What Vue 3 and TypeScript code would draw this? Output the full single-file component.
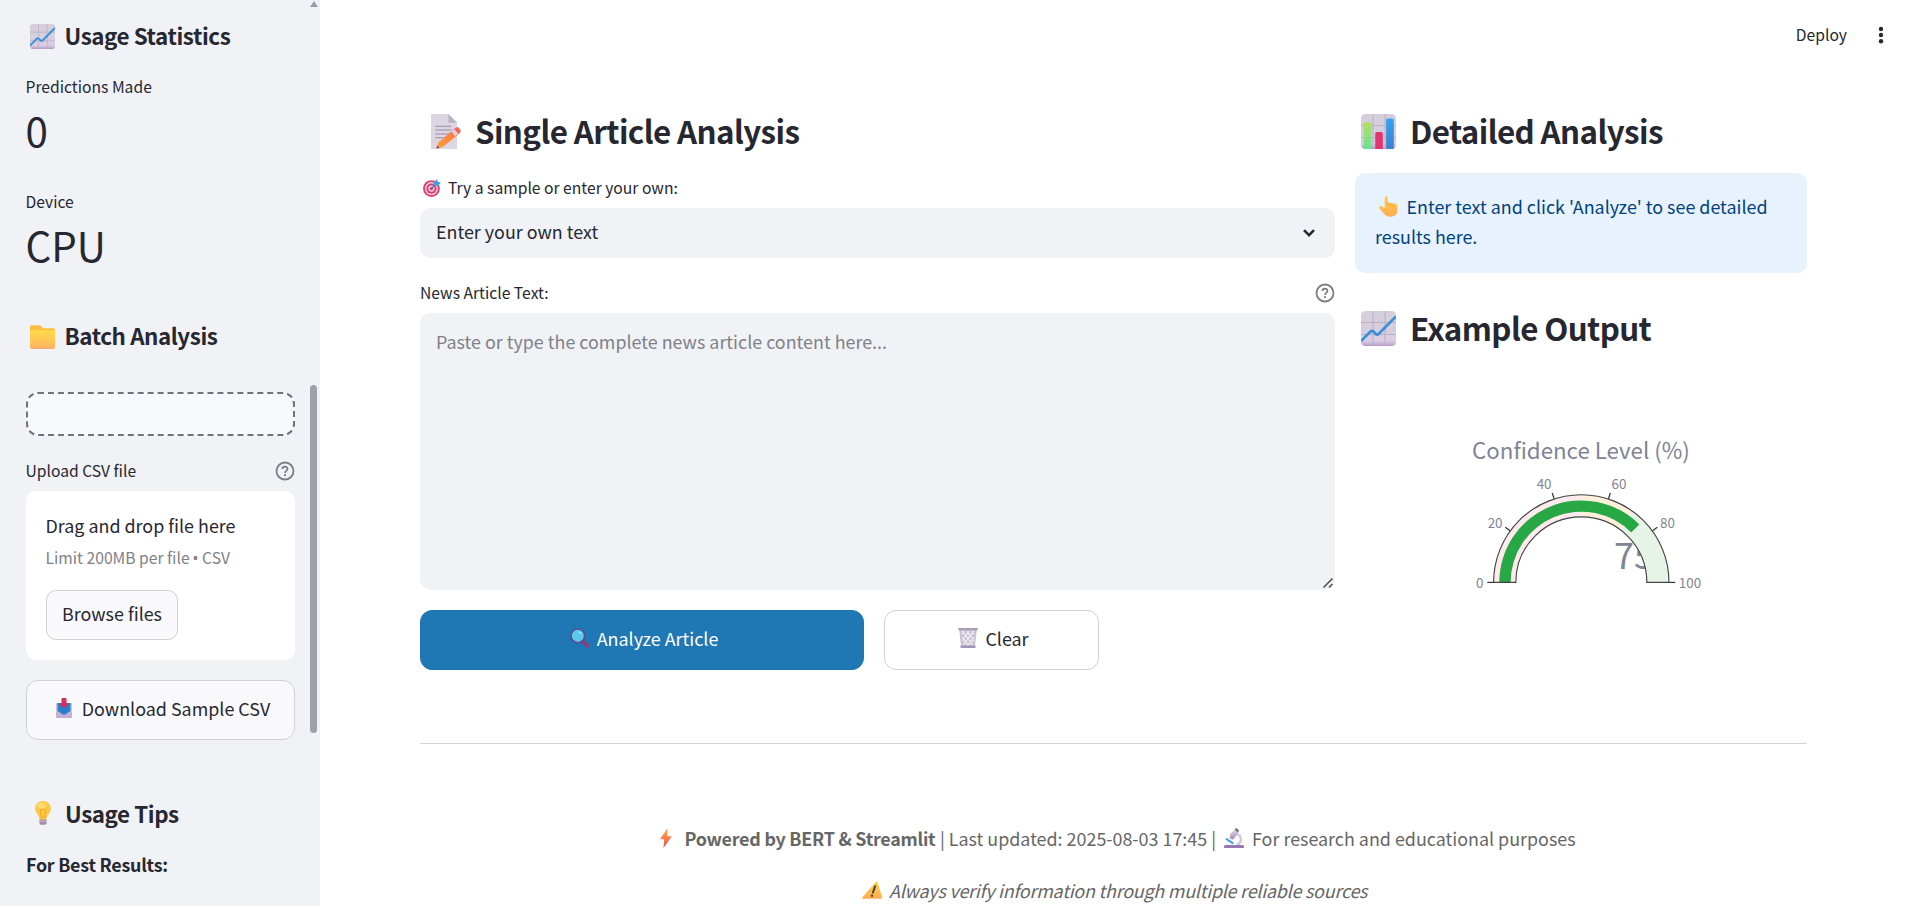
<script setup lang="ts">
import { computed } from 'vue'

const value = 75
const cx = 106.3
const cy = 152.4

function point(pct: number, r: number): string {
  const a = Math.PI * (1 - pct / 100)
  return `${(cx + r * Math.cos(a)).toFixed(2)} ${(cy - r * Math.sin(a)).toFixed(2)}`
}
function band(from: number, to: number, inner: number, outer: number): string {
  return `M${point(from, outer)}A${outer} ${outer} 0 0 1 ${point(to, outer)}L${point(to, inner)}A${inner} ${inner} 0 0 0 ${point(from, inner)}Z`
}
const steps = [
  { from: 0, to: 50, fill: '#ffebee' },
  { from: 50, to: 70, fill: '#fff0dc' },
  { from: 70, to: 100, fill: '#e8f3e8' },
]
const ticks = [
  { v: 0, x: 1, y: 158, anchor: 'start' },
  { v: 20, x: 27.5, y: 98, anchor: 'end' },
  { v: 40, x: 76.5, y: 59, anchor: 'end' },
  { v: 60, x: 136.5, y: 59, anchor: 'start' },
  { v: 80, x: 185, y: 98, anchor: 'start' },
  { v: 100, x: 203.8, y: 158, anchor: 'start' },
]
const bar = computed(() => band(0, value, 70.7, 82))
</script>

<template>
  <svg class="defs" width="0" height="0" aria-hidden="true">
    <defs>
      <linearGradient id="gPaper" x1="0" y1="0" x2="0" y2="1"><stop offset="0" stop-color="#d5cfda" /><stop offset=".85" stop-color="#d9cde4" /><stop offset="1" stop-color="#b59bc9" /></linearGradient>
      <linearGradient id="gBlue" x1="0" y1="0" x2="0" y2="1"><stop offset="0" stop-color="#35a4f2" /><stop offset="1" stop-color="#3c7fd0" /></linearGradient>
      <linearGradient id="gGreen" x1="0" y1="0" x2="0" y2="1"><stop offset="0" stop-color="#b2e05a" /><stop offset="1" stop-color="#67e294" /></linearGradient>
      <linearGradient id="gFolder" x1="0" y1="0" x2="0" y2="1"><stop offset="0" stop-color="#ffdb4d" /><stop offset=".9" stop-color="#ffb75c" /><stop offset="1" stop-color="#f5a387" /></linearGradient>
      <linearGradient id="gPencil" x1="1" y1="0" x2="0" y2="1"><stop offset="0" stop-color="#ff7040" /><stop offset="1" stop-color="#f8a040" /></linearGradient>
      <linearGradient id="gYellow" x1="0" y1="0" x2="0" y2="1"><stop offset="0" stop-color="#ffcf3f" /><stop offset="1" stop-color="#ffab55" /></linearGradient>
      <linearGradient id="gBolt" x1="0" y1="0" x2="0" y2="1"><stop offset="0" stop-color="#ffb044" /><stop offset="1" stop-color="#f3504f" /></linearGradient>
      <linearGradient id="gPurple" x1="0" y1="0" x2="0" y2="1"><stop offset="0" stop-color="#dedbe2" /><stop offset="1" stop-color="#a78dbd" /></linearGradient>
      <radialGradient id="gBulb"><stop offset="0" stop-color="#ffc93c" /><stop offset="1" stop-color="#ffc84a" /></radialGradient>
      <symbol id="chart" viewBox="0 0 32 32" preserveAspectRatio="none">
        <rect width="32" height="32" rx="4" fill="url(#gPaper)" />
        <path d="M11 0V32M22 0V32M0 10.5H32M0 21.5H32" stroke="#bbb2c5" stroke-width="1" />
        <path d="M0 27.5L8.5 19C9.5 18 10.5 18 11.5 19L13.3 20.8C14.3 21.8 15.3 21.8 16.3 20.8L32 5" fill="none" stroke="#378fd6" stroke-width="2.4" />
      </symbol>
      <symbol id="bars" viewBox="0 0 32 32">
        <rect width="32" height="32" rx="4" fill="url(#gPaper)" />
        <path d="M11 0V32M22 0V32M0 10.5H32M0 21.5H32" stroke="#bbb2c5" stroke-width="1" />
        <path d="M2.5 32V9Q2.5 7.5 4 7.5H8Q9.5 7.5 9.5 9V32Z" fill="url(#gGreen)" />
        <path d="M13 32V18Q13 16.5 14.5 16.5H18.5Q20 16.5 20 18V32Z" fill="#e2366c" />
        <path d="M23 32V5.500Q23 4 24.500 4H28.500Q30 4 30 5.500V32Z" fill="url(#gBlue)" />
      </symbol>
      <symbol id="folder" viewBox="0 0 32 32">
        <path d="M0 4Q0 1.500 2.500 1.500H11Q13 1.500 14.500 3L17 5.500H29.500Q32 5.500 32 8V12H0Z" fill="#f9bd42" />
        <path d="M0 9Q0 8 1 8H29Q32 7.500 32 10V29.500Q32 32 29.500 32H2.500Q0 32 0 29.500Z" fill="url(#gFolder)" />
      </symbol>
      <symbol id="memo" viewBox="0 0 32 36">
        <path d="M1 0H19L28 9V36H1Z" fill="#dcd5e3" />
        <path d="M19 0V9H28Z" fill="#b9b0c1" />
        <path d="M5.500 12.500H22M5.500 16.500H22M5.500 20.500H20M5.500 24.500H14" stroke="#948f9a" stroke-width="1.1" />
        <path d="M6.500 35.500L9 29L26 14.500L30.500 20L13 34Z" fill="url(#gPencil)" />
        <path d="M6.500 35.500L7.700 32.500L9.500 34.700Z" fill="#6b3b58" />
        <path d="M22 18L26 14.700L30 20L26 23Z" fill="#dccfe2" />
        <path d="M25 15.500L27.500 13.500Q28.500 13 29.500 14L31.600 17Q32 18 31 19L29.500 20.500Z" fill="#ff6250" />
      </symbol>
      <symbol id="target" viewBox="0 0 32 32">
        <circle cx="15" cy="17" r="15" fill="#e2406f" /><circle cx="15" cy="17" r="11.500" fill="#e8d5e6" /><circle cx="15" cy="17" r="9" fill="#de3d6f" /><circle cx="15" cy="17" r="5.500" fill="#ead9ea" /><circle cx="15" cy="17" r="3" fill="#d33566" />
        <path d="M15 17L24 8" stroke="#2775b8" stroke-width="2" /><path d="M19 12V6L25 0L26 5L32 6L26 12Z" fill="#3ca1e8" />
      </symbol>
      <symbol id="search" viewBox="0 0 32 32">
        <path d="M20.500 21.500L28 28.500" stroke="#85417d" stroke-width="6" stroke-linecap="round" />
        <circle cx="12.500" cy="12.500" r="11" fill="#5bc8ec" stroke="#594e91" stroke-width="2.600" />
        <ellipse cx="16.500" cy="7.500" rx="2.500" ry="1.500" fill="#a4e5fb" transform="rotate(35 16.500 7.500)" />
      </symbol>
      <symbol id="trash" viewBox="0 0 32 32">
        <path d="M2 3H30L27 31H5Z" fill="#c9c1d4" />
        <path d="M7 5L24 28M14 5L26 21M22 5L26 10M7 15L17 29M25 5L8 28M18 5L7 20M10 5L6 10M26 15L15 29" stroke="#f4f0f7" stroke-width="1.700" />
        <rect x="0" y="0" width="32" height="3.500" rx="1.500" fill="#a79eb2" /><rect x="4" y="28" width="24" height="4" rx="1" fill="#a394b8" />
      </symbol>
      <symbol id="inbox" viewBox="0 0 32 40">
        <rect y="10" width="32" height="30" rx="2" fill="#c9c3d3" />
        <path d="M3 10H29V26L20 33H12L3 26Z" fill="#287fce" />
        <path d="M0 29H9C11 29 10 34 13 34H19C22 34 21 29 23 29H32V38Q32 40 30 40H2Q0 40 0 38Z" fill="#c4b0d6" />
        <path d="M11 0H21V11H26L16 21L6 11H11Z" fill="#d62e5d" />
      </symbol>
      <symbol id="bulb" viewBox="0 0 20 32">
        <rect x="5.500" y="22" width="9" height="8.500" rx="2" fill="#a88cac" /><path d="M6 26H14" stroke="#d2c2d6" />
        <path d="M10 0C4 0 0 4.500 0 9.500C0 14.500 4 17 5.500 22Q6 24 8 24H12Q14 24 14.500 22C16 17 20 14.500 20 9.500C20 4.500 16 0 10 0Z" fill="url(#gBulb)" />
        <ellipse cx="8" cy="6" rx="5" ry="4" fill="#ffe184" opacity=".7" /><path d="M8.500 23L6.500 14Q6 10.500 10 10.500T13.500 14L11.500 23" fill="none" stroke="#f3a22e" stroke-width="1.300" />
      </symbol>
      <symbol id="hand" viewBox="0 0 30 32">
        <path d="M9 2.500Q9 0 11.500 0T14 2.500V10Q17 8.500 18.500 11Q21 9.500 23 12Q26 10.500 27 12Q29 13 29 16V22Q29 32 18 32Q11 32 8 28L1.500 20Q-.5 17 2 15.500Q4 14.500 6.500 17L9 19Z" fill="url(#gYellow)" />
        <path d="M14 10V15M18.500 11V15M23 12V15.500" stroke="#ee9c3f" stroke-width="1" />
      </symbol>
      <symbol id="bolt" viewBox="0 0 18 32"><path d="M11.500 0L0 17Q-.3 18 1 18H6L5 32L18 14Q18.300 13 17 13H11Z" fill="url(#gBolt)" /></symbol>
      <symbol id="scope" viewBox="0 0 32 32">
        <path d="M17 9Q28 10 27 20Q26 25 20 27" fill="none" stroke="#cfc9d8" stroke-width="3.800" />
        <path d="M10 9L18 2L23 8L15 18Q11 19 9 15Z" fill="url(#gPurple)" /><path d="M17 2L20 0L24 4L22 7Z" fill="#6e6777" />
        <path d="M3 17L15 25" stroke="#3d9fe8" stroke-width="3" /><path d="M2 27H30Q32 27 32 32H0Q0 27 2 27Z" fill="#9676b4" />
      </symbol>
      <symbol id="warn" viewBox="0 0 32 28">
        <path d="M22 1Q24 -.5 25 2L32 25Q32 28 30 28H2Q-1 28 1 25Z" fill="url(#gYellow)" /><path d="M21 8L17.500 18" stroke="#44414a" stroke-width="3.200" stroke-linecap="round" /><circle cx="16" cy="23" r="1.900" fill="#44414a" />
      </symbol>
      <symbol id="help" viewBox="0 0 20 20">
        <circle cx="10" cy="10" r="8.500" fill="none" stroke="#7c7d83" stroke-width="1.800" />
        <path d="M7.400 8.100Q7.400 5.700 10 5.700T12.500 8Q12.500 9.100 11.200 9.900Q10 10.600 10 11.900" fill="none" stroke="#7c7d83" stroke-width="1.700" /><circle cx="10" cy="14.200" r="1.100" fill="#7c7d83" />
      </symbol>
    </defs>
  </svg>

  <div class="app">
    <aside class="sidebar">
      <div class="side-content">
        <h3 class="first"><svg class="i25"><use href="#chart" /></svg><span>Usage Statistics</span></h3>
        <div class="label l1">Predictions Made</div>
        <div class="metric">0</div>
        <div class="label l2">Device</div>
        <div class="metric cpu">CPU</div>
        <h3 class="batch"><svg class="i25"><use href="#folder" /></svg><span>Batch Analysis</span></h3>
        <div class="dashed"></div>
        <div class="label l3"><span>Upload CSV file</span><svg class="help"><use href="#help" /></svg></div>
        <div class="uploader">
          <div class="drag">Drag and drop file here</div>
          <div class="limit">Limit 200MB per file <span class="dot">•</span> CSV</div>
          <button class="browse">Browse files</button>
        </div>
        <button class="download"><svg class="i-inbox"><use href="#inbox" /></svg>Download Sample CSV</button>
        <h3 class="tips"><svg class="i-bulb"><use href="#bulb" /></svg><span>Usage Tips</span></h3>
        <div class="best">For Best Results:</div>
      </div>
      <div class="scroll"><i class="arrow"></i><i class="thumb"></i></div>
    </aside>

    <main>
      <header>
        <span>Deploy</span>
        <svg width="6" height="18" viewBox="0 0 6 18" fill="#262730"><circle cx="3" cy="3" r="2.200" /><circle cx="3" cy="9" r="2.200" /><circle cx="3" cy="15.200" r="2.200" /></svg>
      </header>
      <div class="columns">
        <section class="left">
          <h2><svg class="i-memo"><use href="#memo" /></svg><span>Single Article Analysis</span></h2>
          <div class="label try"><svg class="i-target"><use href="#target" /></svg><span>Try a sample or enter your own:</span></div>
          <div class="select"><span>Enter your own text</span><svg width="14" height="10" viewBox="0 0 14 10"><path d="M2 2.200L7 7.200L12 2.200" fill="none" stroke="#262730" stroke-width="2.600" /></svg></div>
          <div class="label news"><span>News Article Text:</span><svg class="help"><use href="#help" /></svg></div>
          <div class="area"><span>Paste or type the complete news article content here...</span><svg class="grip" width="10" height="10" viewBox="0 0 10 10"><path d="M.5 9.500L9.500 .5M6 9.500L9.500 6" stroke="#55565c" stroke-width="1.700" /></svg></div>
          <div class="actions">
            <button class="analyze"><svg class="i20"><use href="#search" /></svg>Analyze Article</button>
            <button class="clear"><svg class="i20"><use href="#trash" /></svg>Clear</button>
          </div>
        </section>
        <section class="right">
          <h2><svg class="i35"><use href="#bars" /></svg><span>Detailed Analysis</span></h2>
          <div class="alert"><svg class="i-hand"><use href="#hand" /></svg>Enter text and click 'Analyze' to see detailed<br />results here.</div>
          <h2 class="example"><svg class="i35"><use href="#chart" /></svg><span>Example Output</span></h2>
          <svg class="gauge" width="240" height="170" viewBox="0 0 240 170">
            <text class="g-title" x="106" y="29" text-anchor="middle">Confidence Level (%)</text>
            <text class="g-value" x="139" y="139">75</text>
            <path v-for="s in steps" :key="s.from" :d="band(s.from, s.to, 65.5, 87.7)" :fill="s.fill" />
            <path :d="bar" fill="#28a745" />
            <path :d="band(0, 100, 65.5, 87.7)" fill="none" stroke="#444" stroke-width="1.150" />
            <g v-for="t in ticks" :key="t.v">
              <path :d="`M${point(t.v, 88)}L${point(t.v, 94)}`" stroke="#333" stroke-width="1.200" />
              <text class="g-tick" :x="t.x" :y="t.y" :text-anchor="t.anchor">{{ t.v }}</text>
            </g>
          </svg>
        </section>
      </div>
      <hr />
      <footer>
        <div class="foot"><svg class="i-bolt"><use href="#bolt" /></svg><b>Powered by BERT &amp; Streamlit</b><span class="mid">| Last updated: 2025-08-03 17:45 |</span><svg class="i-scope"><use href="#scope" /></svg><span>For research and educational purposes</span></div>
        <div class="foot note"><svg class="i-warn"><use href="#warn" /></svg><em>Always verify information through multiple reliable sources</em></div>
      </footer>
    </main>
  </div>
</template>

<style>
html, body { margin: 0; overflow: hidden; }
</style>

<style scoped>
.defs { position: absolute; }
.app { display: flex; width: 1919px; height: 906px; overflow: hidden; background: #fff; color: #262730; font: 400 17.9px/30px "Noto Sans CJK SC", "Noto Sans", sans-serif; white-space: nowrap; }
svg { display: block; flex: none; overflow: visible; }
h2, h3 { margin: 0; display: flex; align-items: center; font-weight: 600; }
button { font: inherit; color: inherit; box-sizing: border-box; padding: 0; display: flex; align-items: center; justify-content: center; border: 1px solid #d0d1d5; border-radius: 10px; background: #f9f9fb; }
.i20 { width: 20px; height: 20px; }
.i25 { width: 25px; height: 25px; }
.i35 { width: 35px; height: 35px; }
.help { width: 20px; height: 20px; }
.sidebar { width: 320px; flex: none; background: #f0f2f6; display: flex; }
.side-content { width: 269px; padding-left: 26px; }
h3 { height: 40px; font-size: 22.4px; line-height: 40px; letter-spacing: -.44px; }
h3 svg { margin: 2px 9.500px 0 4px; }
.first { margin-top: 15px; }
.label { font-size: 15.660px; height: 24px; line-height: 26px; }
.side-content .label, .metric { text-indent: -.5px; }
.l1 { margin-top: 19px; }
.l2 { margin-top: 33px; }
.metric { margin-top: 4px; height: 54px; font-size: 40.300px; line-height: 56px; font-weight: 400; }
.batch { margin-top: 44px; }
.dashed { margin-top: 37px; box-sizing: border-box; height: 44px; border: 2px dashed #6c757d; border-radius: 12px; background: #f8f9fc; }
.l3, .news { display: flex; justify-content: space-between; align-items: center; }
.l3 { margin-top: 22px; }
.l3 .help { margin-top: 2px; }
.uploader { margin-top: 9px; box-sizing: border-box; height: 169px; padding: 20px; border-radius: 10px; background: #fff; }
.drag { height: 29px; line-height: 29px; text-indent: -.5px; }
.limit { margin-top: 5px; height: 24px; line-height: 26px; font-size: 15.660px; color: #808189; text-indent: -.5px; }
.dot { display: inline-block; width: 5.500px; text-indent: -.5px; font-family: "Noto Sans", sans-serif; line-height: 20px; }
.browse { margin-top: 21px; width: 132px; height: 50px; }
.browse, .download, .actions button { padding-bottom: 5px; }
.download { margin-top: 20px; width: 269px; height: 60px; border-radius: 12px; }
.i-inbox { width: 16px; height: 20px; margin: 0 10px 0 5px; }
.tips { margin-top: 53px; }
.tips .i-bulb { width: 16px; height: 25px; margin: 0 14px 0 9px; }
.best { margin-top: 16px; font-weight: 600; letter-spacing: -.25px; }
.scroll { width: 9px; margin-left: 14px; display: flex; flex-direction: column; align-items: center; }
.arrow { margin-top: 1px; border: 4.500px solid transparent; border-top: 0; border-bottom: 6px solid #9b9ca1; }
.thumb { margin-top: 378px; width: 7px; height: 348px; border-radius: 4px; background: #a0a1a6; }
main { flex: 1; padding: 0 112px 0 100px; }
header { height: 105px; margin-right: -77px; display: flex; justify-content: flex-end; font-size: 15.660px; }
header span { height: 24px; line-height: 24px; margin-top: 23px; }
header svg { margin: 25.500px 0 0 31px; }
.columns { display: flex; gap: 20px; height: 638px; }
.left { width: 915px; }
.right { width: 452px; }
h2 { height: 50px; font-size: 31.300px; line-height: 52px; letter-spacing: -.59px; }
h2 span { height: 50px; }
.i-memo { width: 31px; height: 35px; margin: 3px 14px 0 10px; }
h2 .i35 { margin: 3px 14px 0 6px; }
.try { display: flex; align-items: center; margin-top: 20px; }
.i-target { width: 18px; height: 18px; margin: 1px 7px 0 3px; }
.label span { height: 24px; }
.select { margin-top: 9px; box-sizing: border-box; height: 50px; border-radius: 10px; background: #f0f2f6; padding: 8px 19px 12px 16px; display: flex; align-items: center; justify-content: space-between; }
.select svg { margin-top: 4px; }
.news { margin-top: 22px; }
.news .help { margin-top: 2px; }
.area { margin-top: 9px; box-sizing: border-box; height: 277px; border-radius: 10px; background: #f0f2f6; padding: 13px 16px; color: #808189; position: relative; }
.area span { display: block; }
.grip { position: absolute; right: 2px; bottom: 2px; }
.actions { margin-top: 20px; display: flex; gap: 20px; }
.actions button { height: 60px; border-radius: 12px; gap: 7px; padding-left: 4px; }
.actions .analyze { width: 444px; border-color: #1f77b4; background: #1f77b4; color: #fff; }
.actions .clear { width: 215px; background: #fff; }
.alert { margin-top: 18px; box-sizing: border-box; height: 100px; border-radius: 10px; background: #e8f2fc; color: #004280; padding: 18px 20px; }
.i-hand { display: inline-block; vertical-align: -3px; width: 19px; height: 21px; margin: 0 8.500px 0 4px; }
.example { margin-top: 29px; }
.gauge { margin: 78px 0 0 120px; }
.g-title { font-size: 22.300px; fill: #808495; }
.g-value { font-size: 36px; fill: #808495; }
.g-tick { font-size: 13.400px; fill: #808495; }
hr { margin: 0; border: 0; height: 1px; background: #d3d4d6; }
footer { padding-top: 78px; color: #666; }
.foot { display: flex; align-items: center; height: 32px; line-height: 32px; margin-left: 240px; }
.foot b { letter-spacing: -.24px; }
.foot em { letter-spacing: -.215px; }
.i-bolt { width: 12px; height: 20px; margin-right: 12.500px; }
.mid { margin-left: 4.500px; }
.i-scope { width: 20px; height: 20px; margin: 0 8px; }
.note { margin: 20px 0 0 442px; }
.i-warn { width: 20px; height: 18px; margin-right: 7px; }
</style>
